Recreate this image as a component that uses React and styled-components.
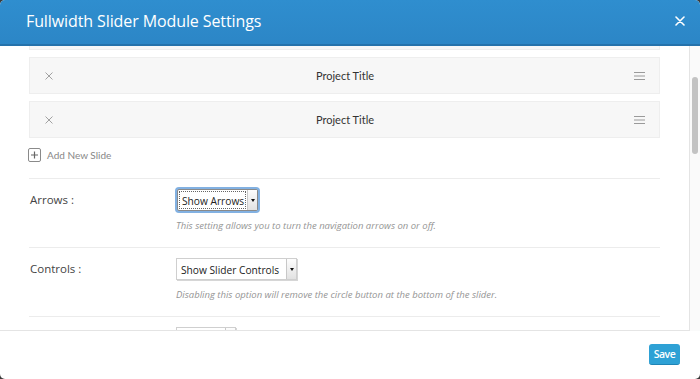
import React from "react";
import styled, { createGlobalStyle, css } from "styled-components";

const Global = createGlobalStyle`
  html, body { margin: 0; padding: 0; background: #3b3b3b; }
  #root { width: 700px; height: 379px; }
  * { box-sizing: border-box; }
`;

const Modal = styled.div`
  width: 700px;
  height: 379px;
  display: flex;
  flex-direction: column;
  background: #fff;
  border-radius: 5px;
  overflow: hidden;
`;

const Header = styled.div`
  height: 46px;
  flex: none;
  display: flex;
  align-items: center;
  justify-content: space-between;
  padding: 0 15px 2px 26px;
  background: linear-gradient(#2f8ecf, #2c86c6);
  border-bottom: 2px solid #2572ab;
`;

const Title = styled.h1`
  margin: 0;
  font: 400 16px/1 "Open Sans", sans-serif;
  color: #fff;
  letter-spacing: -0.1px;
`;

const CloseBtn = styled.button`
  border: 0;
  background: none;
  padding: 0;
  width: 10px;
  height: 10px;
  display: flex;
  cursor: pointer;
`;

const Body = styled.div`
  flex: 1;
  display: flex;
  min-height: 0;
`;

const ScrollArea = styled.div`
  flex: 1;
  overflow: hidden;
  border-right: 1px solid #e4e4e4;
  border-bottom: 1px solid #e4e4e4;
`;

const Content = styled.div`
  margin-top: -33px;
  padding: 0 29px 0 29px;
`;

const ScrollTrack = styled.div`
  width: 10px;
  flex: none;
  background: #fafafa;
  padding: 31px 0 0 2px;
`;

const Thumb = styled.div`
  width: 6px;
  height: 77px;
  border-radius: 3px;
  background: #c3c3c3;
`;

const SlideRow = styled.div`
  height: 37px;
  margin-bottom: 7px;
  background: #f7f7f7;
  border: 1px solid #eeeeee;
  display: grid;
  grid-template-columns: 40px 1fr 40px;
  align-items: center;
  padding: 0 14px 0 15px;
`;

const SlideTitle = styled.div`
  text-align: center;
  font: 400 11px/1 "Lato", sans-serif;
  color: #333;
`;

const IconCell = styled.div`
  display: flex;
  justify-content: ${(p) => (p.$end ? "flex-end" : "flex-start")};
`;

const AddSlide = styled.div`
  height: 20px;
  margin-bottom: 13px;
  display: flex;
  align-items: center;
  gap: 6px;
  margin-left: -1px;
  font: 400 10px/1 "Lato", sans-serif;
  color: #888;
`;

const SettingRow = styled.div`
  border-top: 1px solid #ececec;
  display: grid;
  grid-template-columns: 147px 1fr;
  padding: 10px 0 14px;
`;

const Label = styled.div`
  font: 400 11.5px/22px "Open Sans", sans-serif;
  color: #444;
  padding-left: 1px;
`;

const Control = styled.div`
  display: flex;
  flex-direction: column;
  align-items: flex-start;
`;

const SelectBox = styled.div`
  height: 22px;
  display: inline-flex;
  align-items: stretch;
  background: #fff;
  border: 1px solid ${(p) => (p.$focused ? "#8a8a8a" : "#cfcfcf")};
  box-shadow: ${(p) => (p.$focused ? "0 0 0 2px #82b1e2" : "1px 1px 0 #d6d6d6")};
  border-radius: ${(p) => (p.$focused ? "2px" : "0")};
  ${(p) =>
    p.$focused &&
    css`
      margin-left: 1px;
    `}
`;

const SelectValue = styled.div`
  font: 400 10.2px/18px "Open Sans", sans-serif;
  color: #222;
  min-width: ${(p) => p.$min || 0}px;
  padding: 0 ${(p) => (p.$focused ? "1px" : "5px")} 0 2px;
  margin: 1px;
  border: 1px ${(p) => (p.$focused ? "dotted #666" : "solid transparent")};
  white-space: nowrap;
`;

const SelectArrow = styled.div`
  width: 10px;
  border-left: 1px solid #c8c8c8;
  background: linear-gradient(#fdfdfd, #e2e2e2);
  display: flex;
  align-items: center;
  justify-content: center;
  &::after {
    content: "";
    border-left: 2.5px solid transparent;
    border-right: 2.5px solid transparent;
    border-top: 3px solid #111;
  }
`;

const Description = styled.div`
  margin-top: 8px;
  font: italic 400 9.5px/14px "Open Sans", sans-serif;
  color: #959595;
  white-space: nowrap;
`;

const Footer = styled.div`
  height: 48px;
  flex: none;
  display: flex;
  align-items: center;
  justify-content: flex-end;
  padding: 0 20px 2px 0;
`;

const SaveBtn = styled.button`
  width: 31px;
  height: 21px;
  padding: 0;
  border: 0;
  border-bottom: 1px solid #1f84b5;
  border-radius: 3px;
  background: #2ea1d5;
  color: #fff;
  font: 600 10.5px/20px "Open Sans", sans-serif;
  letter-spacing: -0.5px;
  cursor: pointer;
`;

const Cross = ({ size = 9, color = "#fff", w = 1.6 }) => (
  <svg width={size} height={size} viewBox="0 0 10 10">
    <path d="M1 1L9 9M9 1L1 9" stroke={color} strokeWidth={w} strokeLinecap="round" />
  </svg>
);

const Hamburger = () => (
  <svg width="11" height="8" viewBox="0 0 11 8">
    <path d="M0 0.5H11M0 4H11M0 7.5H11" stroke="#9a9a9a" strokeWidth="1" />
  </svg>
);

const PlusBox = () => (
  <svg width="13" height="14" viewBox="0 0 13 14">
    <rect x="0.5" y="0.5" width="12" height="13" rx="1.5" fill="none" stroke="#8a8a8a" />
    <path d="M6.5 3.5V10.5M3 7H10" stroke="#666" strokeWidth="1.2" />
  </svg>
);

const Slide = ({ title }) => (
  <SlideRow>
    <IconCell>
      <Cross size={8} color="#8a8a8a" w={1} />
    </IconCell>
    <SlideTitle>{title}</SlideTitle>
    <IconCell $end>
      <Hamburger />
    </IconCell>
  </SlideRow>
);

const FakeSelect = ({ value, focused, min }) => (
  <SelectBox $focused={focused}>
    <SelectValue $focused={focused} $min={min}>{value}</SelectValue>
    <SelectArrow />
  </SelectBox>
);

const Setting = ({ label, value, focused, min, desc }) => (
  <SettingRow>
    <Label>{label}</Label>
    <Control>
      <FakeSelect value={value} focused={focused} min={min} />
      {desc && <Description>{desc}</Description>}
    </Control>
  </SettingRow>
);

export default function App() {
  return (
    <>
      <Global />
      <Modal>
        <Header>
          <Title>Fullwidth Slider Module Settings</Title>
          <CloseBtn aria-label="Close">
            <Cross size={10} />
          </CloseBtn>
        </Header>
        <Body>
          <ScrollArea>
            <Content>
              <Slide title="Project Title" />
              <Slide title="Project Title" />
              <Slide title="Project Title" />
              <AddSlide>
                <PlusBox />
                Add New Slide
              </AddSlide>
              <Setting
                label="Arrows :"
                value="Show Arrows"
                focused
                desc="This setting allows you to turn the navigation arrows on or off."
              />
              <Setting
                label="Controls :"
                value="Show Slider Controls"
                desc="Disabling this option will remove the circle button at the bottom of the slider."
              />
              <Setting label="Autoplay :" value="Off" min={46} />
            </Content>
          </ScrollArea>
          <ScrollTrack>
            <Thumb />
          </ScrollTrack>
        </Body>
        <Footer>
          <SaveBtn>Save</SaveBtn>
        </Footer>
      </Modal>
    </>
  );
}
